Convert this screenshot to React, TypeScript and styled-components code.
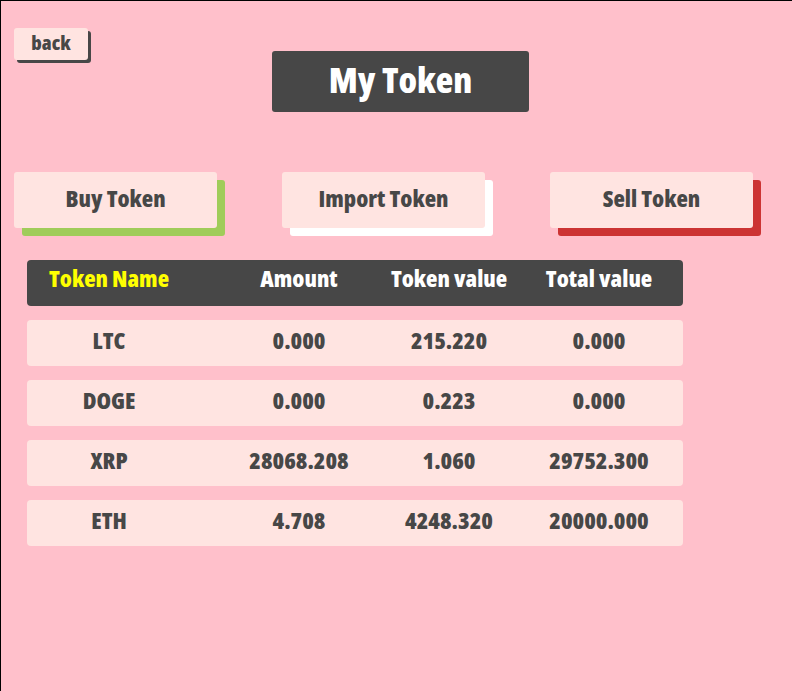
import React from "react";
import styled, { createGlobalStyle } from "styled-components";

const GlobalStyle = createGlobalStyle`
  html, body {
    margin: 0;
    padding: 0;
    background: #ffc0cb;
    overflow: hidden;
  }
  * { box-sizing: border-box; }
`;

const FONT = `"Open Sans", "Noto Sans", "Liberation Sans", Arial, sans-serif`;

const Page = styled.div`
  min-height: 100vh;
  width: calc(100vw + 20px);
  background: #ffc0cb;
  border-top: 1px solid #000;
  border-left: 1px solid #000;
  padding: 27px 0 0 13px;
  font-family: ${FONT};
  font-stretch: 75%;
  font-weight: 800;
  color: #474747;
`;

const Header = styled.div`
  display: flex;
  align-items: flex-start;
`;

const BackButton = styled.button`
  width: 74px;
  height: 32px;
  padding: 0 0 4px;
  border: none;
  border-radius: 3px;
  background: #ffe4e1;
  box-shadow: 3px 3px 0 #474747;
  font-family: ${FONT};
  font-stretch: 75%;
  font-weight: 800;
  font-size: 20px;
  color: #474747;
  display: flex;
  align-items: center;
  justify-content: center;
`;

const Title = styled.h1`
  margin: 23px 0 0 184px;
  width: 257px;
  height: 61px;
  padding-bottom: 5px;
  border-radius: 3px;
  background: #474747;
  color: #fff;
  font-size: 36px;
  font-weight: 800;
  display: flex;
  align-items: center;
  justify-content: center;
`;

const ActionRow = styled.div`
  display: grid;
  grid-template-columns: repeat(3, 203px);
  column-gap: 65px;
  margin-top: 60px;
`;

const ActionButton = styled.button<{ $shadow: string }>`
  height: 56px;
  padding: 0 0 4px;
  border: none;
  border-radius: 3px;
  background: #ffe4e1;
  box-shadow: 8px 8px 0 ${(p) => p.$shadow};
  font-family: ${FONT};
  font-stretch: 75%;
  font-weight: 800;
  font-size: 23.5px;
  color: #474747;
  display: flex;
  align-items: center;
  justify-content: center;
`;

const Table = styled.div`
  width: 656px;
  margin: 32px 0 0 13px;
  display: flex;
  flex-direction: column;
  gap: 14px;
`;

const Row = styled.div<{ $head?: boolean }>`
  height: 46px;
  border-radius: 4px;
  background: ${(p) => (p.$head ? "#474747" : "#ffe4e1")};
  color: ${(p) => (p.$head ? "#fff" : "#474747")};
  padding-bottom: ${(p) => (p.$head ? "10px" : "6px")};
  display: grid;
  grid-template-columns: 164px 216px 84px 216px;
  align-items: center;
  font-size: 23.5px;
`;

const Cell = styled.div<{ $accent?: boolean }>`
  justify-self: center;
  white-space: nowrap;
  color: ${(p) => (p.$accent ? "#ffff00" : "inherit")};
`;

const tokens = [
  ["LTC", "0.000", "215.220", "0.000"],
  ["DOGE", "0.000", "0.223", "0.000"],
  ["XRP", "28068.208", "1.060", "29752.300"],
  ["ETH", "4.708", "4248.320", "20000.000"],
];

export default function App() {
  return (
    <>
      <GlobalStyle />
      <Page>
        <Header>
          <BackButton>back</BackButton>
          <Title>My Token</Title>
        </Header>
        <ActionRow>
          <ActionButton $shadow="#a0cc5a">Buy Token</ActionButton>
          <ActionButton $shadow="#ffffff">Import Token</ActionButton>
          <ActionButton $shadow="#cc3333">Sell Token</ActionButton>
        </ActionRow>
        <Table>
          <Row $head>
            <Cell $accent>Token Name</Cell>
            <Cell>Amount</Cell>
            <Cell>Token value</Cell>
            <Cell>Total value</Cell>
          </Row>
          {tokens.map((t) => (
            <Row key={t[0]}>
              {t.map((v, i) => (
                <Cell key={i}>{v}</Cell>
              ))}
            </Row>
          ))}
        </Table>
      </Page>
    </>
  );
}
